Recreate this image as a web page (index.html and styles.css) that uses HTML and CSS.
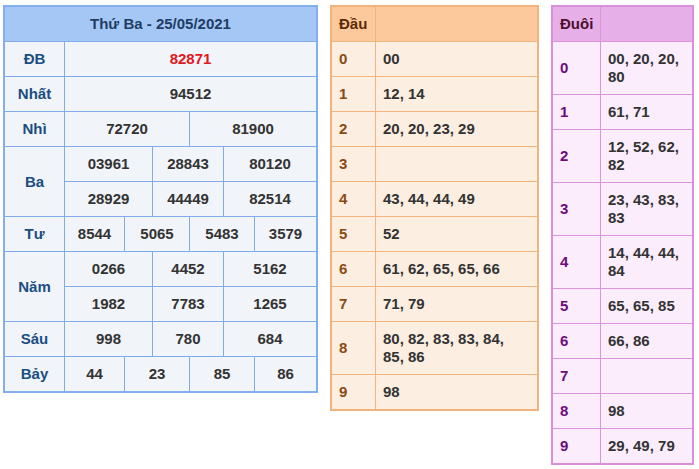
FILE: index.html
```html
<!DOCTYPE html>
<html lang="vi">
<head>
<meta charset="utf-8">
<title>Kết quả xổ số - Thứ Ba 25/05/2021</title>
<link rel="stylesheet" href="styles.css">
</head>
<body>
<div class="page">
  <div class="kq">
    <div class="kq-head">Thứ Ba - 25/05/2021</div>

    <div class="lbl">ĐB</div>
    <div class="val span6 red">82871</div>

    <div class="lbl">Nhất</div>
    <div class="val span6">94512</div>

    <div class="lbl">Nhì</div>
    <div class="val span3">72720</div>
    <div class="val span3">81900</div>

    <div class="lbl row2">Ba</div>
    <div class="val span2">03961</div>
    <div class="val span2">28843</div>
    <div class="val span2">80120</div>
    <div class="val span2">28929</div>
    <div class="val span2">44449</div>
    <div class="val span2">82514</div>

    <div class="lbl">Tư</div>
    <div class="val">8544</div>
    <div class="val span2">5065</div>
    <div class="val span2">5483</div>
    <div class="val">3579</div>

    <div class="lbl row2">Năm</div>
    <div class="val span2">0266</div>
    <div class="val span2">4452</div>
    <div class="val span2">5162</div>
    <div class="val span2">1982</div>
    <div class="val span2">7783</div>
    <div class="val span2">1265</div>

    <div class="lbl">Sáu</div>
    <div class="val span2">998</div>
    <div class="val span2">780</div>
    <div class="val span2">684</div>

    <div class="lbl">Bảy</div>
    <div class="val">44</div>
    <div class="val span2">23</div>
    <div class="val span2">85</div>
    <div class="val">86</div>
  </div>

  <div class="lt dau">
    <div class="lt-head">Đầu</div><div class="lt-head"></div>
    <div class="k">0</div><div class="v">00</div>
    <div class="k">1</div><div class="v">12, 14</div>
    <div class="k">2</div><div class="v">20, 20, 23, 29</div>
    <div class="k">3</div><div class="v"></div>
    <div class="k">4</div><div class="v">43, 44, 44, 49</div>
    <div class="k">5</div><div class="v">52</div>
    <div class="k">6</div><div class="v">61, 62, 65, 65, 66</div>
    <div class="k">7</div><div class="v">71, 79</div>
    <div class="k">8</div><div class="v">80, 82, 83, 83, 84, 85, 86</div>
    <div class="k">9</div><div class="v">98</div>
  </div>

  <div class="lt duoi">
    <div class="lt-head">Đuôi</div><div class="lt-head"></div>
    <div class="k">0</div><div class="v">00, 20, 20, 80</div>
    <div class="k">1</div><div class="v">61, 71</div>
    <div class="k">2</div><div class="v">12, 52, 62, 82</div>
    <div class="k">3</div><div class="v">23, 43, 83, 83</div>
    <div class="k">4</div><div class="v">14, 44, 44, 84</div>
    <div class="k">5</div><div class="v">65, 65, 85</div>
    <div class="k">6</div><div class="v">66, 86</div>
    <div class="k">7</div><div class="v"></div>
    <div class="k">8</div><div class="v">98</div>
    <div class="k">9</div><div class="v">29, 49, 79</div>
  </div>
</div>
</body>
</html>
```

FILE: styles.css
```css
* { box-sizing: border-box; }

html, body {
  margin: 0;
  padding: 0;
  background: #ffffff;
}

body {
  font-family: "Liberation Sans", Arial, sans-serif;
  font-size: 15px;
  font-weight: bold;
  line-height: 18px;
  color: #333333;
}

.page {
  display: flex;
  align-items: flex-start;
  gap: 12px;
  padding: 5px 3px;
}

/* ---------- Main result table ---------- */
.kq {
  width: 315px;
  display: grid;
  grid-template-columns: 59px 59px 27px 36px 33px 30px 61px;
  gap: 1px;
  background: #82abea;
  border: 2px solid #84aeec;
}

.kq > div {
  background: #f1f4f9;
  padding: 8px 2px;
  text-align: center;
  display: flex;
  align-items: center;
  justify-content: center;
  min-height: 34px;
}

.kq .kq-head {
  grid-column: 1 / -1;
  background: #a5c7f5;
  color: #1f3d63;
}

.kq .lbl {
  grid-column: 1;
  color: #1a4e82;
}

.kq .row2 { grid-row: span 2; }
.kq .span2 { grid-column: span 2; }
.kq .span3 { grid-column: span 3; }
.kq .span6 { grid-column: span 6; }

.kq .red { color: #e3161c; }

/* ---------- Loto head/tail tables ---------- */
.lt {
  display: grid;
  gap: 1px;
  border: 2px solid;
}

.lt > div {
  padding: 8px 8px 8px 7px;
  min-height: 34px;
  display: flex;
  align-items: center;
}

.lt .v {
  color: #333333;
  padding-right: 12px;
}

.dau {
  width: 209px;
  grid-template-columns: 43px 161px;
  background: #f2b57e;
  border-color: #f2b37a;
}
.dau > div { background: #fdeee2; }
.dau .lt-head { background: #fbc99b; color: #5c2807; }
.dau .k { color: #8a4a10; }

.duoi {
  width: 143px;
  grid-template-columns: 47px 91px;
  background: #dc94dc;
  border-color: #d98fd9;
}
.duoi > div { background: #fcedfc; }
.duoi .lt-head { background: #e7afe7; color: #4c1030; }
.duoi .k { color: #6c0b7a; }
.duoi .v { padding-right: 8px; }
```
